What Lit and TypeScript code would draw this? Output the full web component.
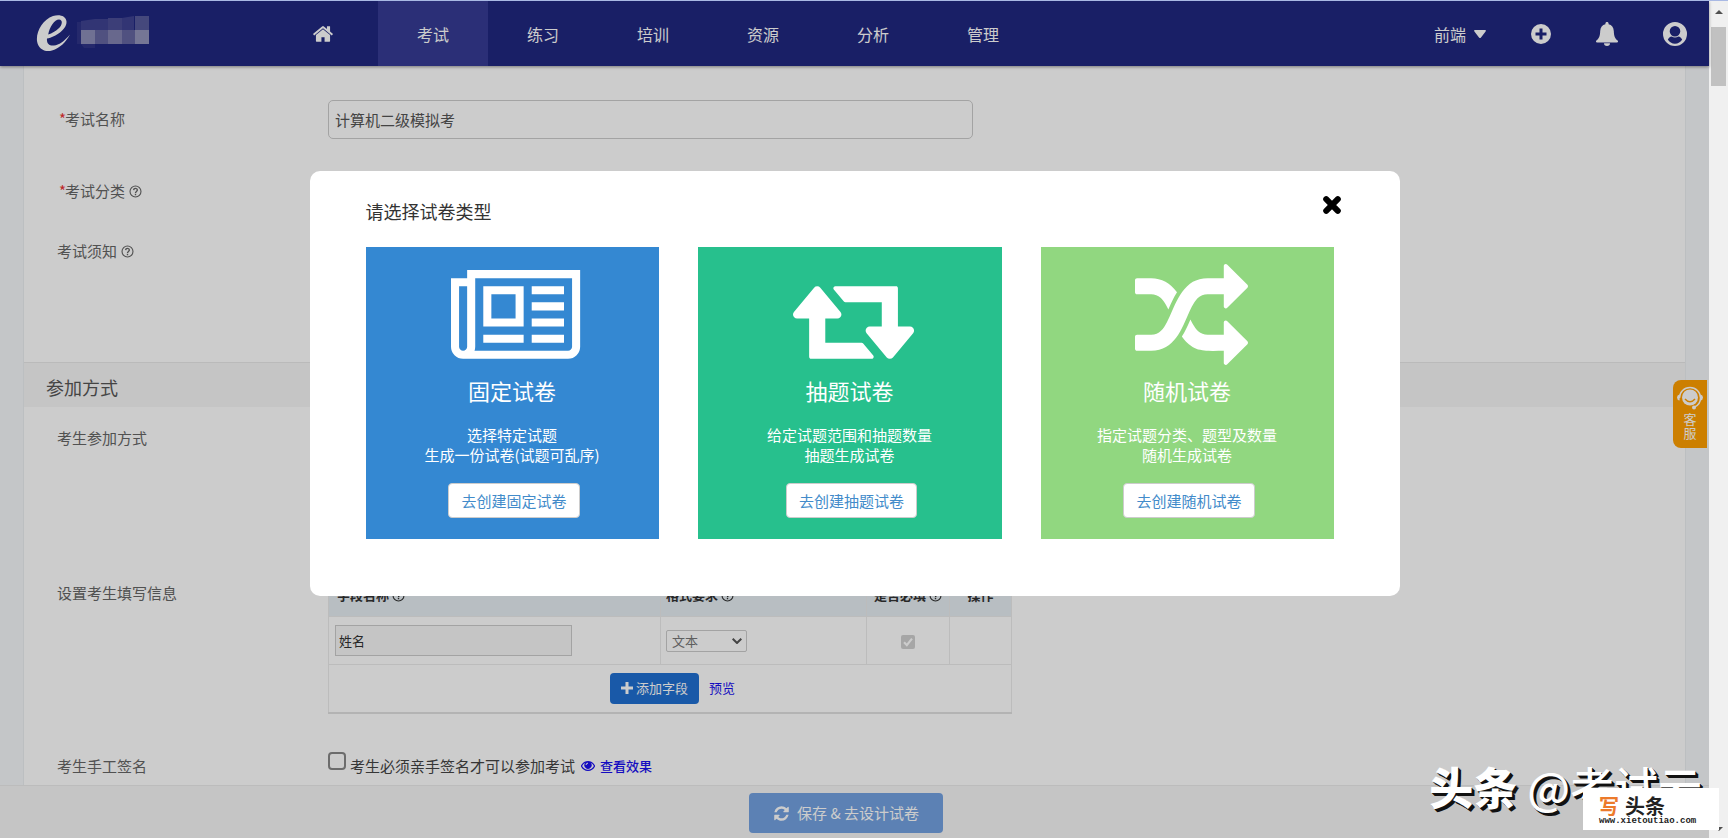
import { LitElement, html, css, svg, TemplateResult } from "lit";
import { customElement, property } from "lit/decorators.js";

const ICONS: Record<string, { box: string; body: TemplateResult }> = {
  home: {
    box: "0 0 1664 1792",
    body: svg`<path d="M1408 992v480q0 26-19 45t-45 19h-384v-384h-256v384h-384q-26 0-45-19t-19-45v-480q0-1 .5-3t.5-3l575-474 575 474q1 2 1 6zm223-69l-62 74q-8 9-21 11h-3q-13 0-21-7l-692-577-692 577q-12 8-24 7-13-2-21-11l-62-74q-8-10-7-23.500t11-21.500l719-599q32-26 76-26t76 26l244 204v-195q0-14 9-23t23-9h192q14 0 23 9t9 23v408l219 182q10 8 11 21.500t-7 23.500z"/>`,
  },
  plusCircle: {
    box: "0 0 20 20",
    body: svg`<path fill-rule="evenodd" d="M10 0a10 10 0 1 1 0 20a10 10 0 0 1 0-20zM8.500 4.500v4h-4v3h4v4h3v-4h4v-3h-4v-4z"/>`,
  },
  bell: {
    box: "0 0 22 24",
    body: svg`<path d="M11 0c1 0 1.600.7 1.600 1.700v.5c3.200.7 5 3.300 5.200 6.800.2 5 .9 7 3.800 9.600.8.7.4 1.900-.6 1.900H1c-1 0-1.400-1.200-.6-1.900C3.300 16 4 14 4.200 9c.2-3.500 2-6.100 5.200-6.800v-.5C9.400.7 10 0 11 0zM8 21.300h6a3 2.700 0 0 1-6 0z"/>`,
  },
  user: {
    box: "0 0 24 24",
    body: svg`<path fill-rule="evenodd" d="M12 0a12 12 0 1 1 0 24a12 12 0 0 1 0-24zM12 4a5.300 5.300 0 1 0 0 10.600A5.300 5.300 0 0 0 12 4zM4.800 17.600c1.500 2.600 4.200 4.200 7.200 4.200s5.700-1.600 7.200-4.200c-.9-2-2.200-3-3.700-3.200a7 7 0 0 1-7 0c-1.500.2-2.800 1.200-3.700 3.200z"/>`,
  },
  caret: { box: "0 0 12 8", body: svg`<path d="M1 0h10q1.600.2.600 1.400L7 7.400q-1 1-2 0L.4 1.400Q-.6.2 1 0z"/>` },
  help: {
    box: "0 0 14 14",
    body: svg`<g fill="none" stroke="currentColor"><circle cx="7" cy="7" r="5.900" stroke-width="1.200"/><path stroke-width="1.500" d="M5 5.500c.1-2.600 4-2.400 4 0 0 1.500-2 1.400-2 3M7 9.500v1.500"/></g>`,
  },
  close: {
    box: "0 0 18 18",
    body: svg`<path stroke="currentColor" stroke-width="6" stroke-linecap="round" d="M3.200 3.200l11.600 11.600M14.800 3.200L3.200 14.800"/>`,
  },
  plus: { box: "0 0 12 12", body: svg`<path d="M4.500 0h3v4.500H12v3H7.500V12h-3V7.500H0v-3h4.500z"/>` },
  eye: {
    box: "0 0 14 10",
    body: svg`<path fill-rule="evenodd" d="M7 0c3 0 5.500 1.700 7 4.500v1C12.500 8.300 10 10 7 10S1.500 8.300 0 5.500v-1C1.500 1.700 4 0 7 0zm-2.600 1.800C3 2.500 1.900 3.600 1.100 5 2.400 7.400 4.500 8.800 7 8.800s4.600-1.400 5.900-3.800c-.8-1.400-1.900-2.500-3.300-3.200a3.600 3.600 0 1 1-5.200 0zM7 1.700c-1.500 0-2.400 1-2.400 2.400h1C5.600 3.200 6.200 2.700 7 2.700z"/>`,
  },
  refresh: {
    box: "0 0 1792 1792",
    body: svg`<path d="M1639 1056q0 5-1 7-64 268-268 434.500t-478 166.500q-146 0-282.500-55t-243.500-157l-129 129q-19 19-45 19t-45-19-19-45v-448q0-26 19-45t45-19h448q26 0 45 19t19 45-19 45l-137 137q71 66 161 102t187 36q134 0 250-65t186-179q11-17 53-117 8-23 30-23h192q13 0 22.500 9.500t9.500 22.500zm25-800v448q0 26-19 45t-45 19h-448q-26 0-45-19t-19-45 19-45l138-138q-148-137-349-137-134 0-250 65t-186 179q-11 17-53 117-8 23-30 23h-199q-13 0-22.500-9.500t-9.500-22.500v-7q65-268 270-434.500t480-166.500q146 0 284 55.500t245 156.500l130-129q19-19 45-19t45 19 19 45z"/>`,
  },
  chevron: { box: "0 0 10 6", body: svg`<path fill="none" stroke="currentColor" stroke-width="2" d="M.7.7L5 5 9.300.7"/>` },
  check: { box: "0 0 13 13", body: svg`<path fill="none" stroke="currentColor" stroke-width="2" d="M2.800 6.800l2.600 2.600 4.800-6"/>` },
  newspaper: {
    box: "0 0 2048 1792",
    body: svg`<path d="M1024 512h-384v384h384v-384zm128 640v128h-640v-128h640zm0-768v640h-640v-640h640zm640 768v128h-512v-128h512zm0-256v128h-512v-128h512zm0-256v128h-512v-128h512zm0-256v128h-512v-128h512zm-1536 960v-960h-128v960q0 26 19 45t45 19 45-19 19-45zm1664 0v-1088h-1536v1088q0 33-11 64h1483q26 0 45-19t19-45zm128-1216v1216q0 80-56 136t-136 56h-1664q-80 0-136-56t-56-136v-1088h256v-128h1792z"/>`,
  },
  retweet: {
    box: "0 0 1920 1792",
    body: svg`<path d="M1280 1504q0 13-9.500 22.500t-22.500 9.500h-960q-8 0-13.500-2t-9-7-5.500-8-3-11.500-1-11.500v-600h-192q-26 0-45-19t-19-45q0-24 15-41l320-384q19-22 49-22t49 22l320 384q15 17 15 41 0 26-19 45t-45 19h-192v384h576q16 0 25 11l160 192q7 10 7 21zm640-416q0 24-15 41l-320 384q-20 23-49 23t-49-23l-320-384q-15-17-15-41 0-26 19-45t45-19h192v-384h-576q-16 0-25-12l-160-192q-7-9-7-20 0-13 9.500-22.500t22.500-9.500h960q8 0 13.500 2t9 7 5.500 8 3 11.500 1 11.500v600h192q26 0 45 19t19 45z"/>`,
  },
  random: {
    box: "0 0 1792 1792",
    body: svg`<path d="M666 481q-60 92-137 273-22-45-37-72.500t-40.500-63.500-51-56.500-63-35-81.500-14.500h-224q-14 0-23-9t-9-23v-192q0-14 9-23t23-9h224q250 0 410 225zm1126 799q0 14-9 23l-320 320q-9 9-23 9-13 0-22.500-9.500t-9.500-22.500v-192q-32 0-85 .5t-81 1-73-1-71-5-64-10.500-63-18.500-58-28.500-59-40-55-53.500-56-69.500q59-93 136-273 22 45 37 72.500t40.500 63.500 51 56.500 63 35 81.500 14.500h256v-192q0-14 9-23t23-9q12 0 24 10l319 319q9 9 9 23zm0-896q0 14-9 23l-320 320q-9 9-23 9-13 0-22.500-9.500t-9.500-22.500v-192h-256q-48 0-87 15t-69 45-51 61.500-45 77.500q-32 62-78 171-29 66-49.500 111t-54 105-64 100-74 83-90 68.500-106.500 42-128 16.500h-224q-14 0-23-9t-9-23v-192q0-14 9-23t23-9h224q48 0 87-15t69-45 51-61.500 45-77.500q32-62 78-171 29-66 49.500-111t54-105 64-100 74-83 90-68.500 106.500-42 128-16.500h256v-192q0-14 9-23t23-9q12 0 24 10l319 319q9 9 9 23z"/>`,
  },
  agent: {
    box: "0 0 26 24",
    body: svg`<path fill="none" stroke="currentColor" stroke-width="1.500" d="M2.500 12a10.500 10.500 0 0 1 21 0c0 4-2.500 7.500-6 9"/><path d="M2.600 8.500v6Q0 14 0 11.500t2.600-3zM23.400 8.500v6Q26 14 26 11.500t-2.600-3z"/><circle cx="17" cy="21.500" r="2"/><circle cx="13" cy="11.500" r="8"/><path fill="none" stroke="#ff9f00" stroke-width="1.500" d="M8 13q5 5.500 10 0"/>`,
  },
};

@customElement("ui-icon")
class UiIcon extends LitElement {
  @property() name = "";
  static styles = css`
    :host { display: inline-flex; flex: none; }
    svg { display: block; width: 100%; height: 100%; fill: currentColor; }
  `;
  render() {
    const icon = ICONS[this.name];
    return html`<svg viewBox=${icon.box} aria-hidden="true">${icon.body}</svg>`;
  }
}

@customElement("paper-card")
class PaperCard extends LitElement {
  @property() icon = "";
  @property() heading = "";
  @property({ attribute: false }) lines: string[] = [];
  static styles = css`
    :host {
      display: flex; flex-direction: column; align-items: center; box-sizing: border-box;
      padding: 15px 0 21px; color: #fff; text-align: center;
    }
    .icon { height: 113px; margin-left: 8px; }
    h3 { margin: 0; font-size: 22px; line-height: 30px; font-weight: 400; }
    p { margin: 20px 0 18px; font-size: 15px; line-height: 20px; }
    button {
      height: 35px; padding: 0 12px; margin-left: 4px; border: 1px solid #ccc; border-radius: 4px;
      background: #fff; color: #428bca; font: inherit; font-size: 15px; line-height: 20px;
    }
  `;
  render() {
    return html`
      <ui-icon class="icon" name=${this.icon}></ui-icon>
      <h3>${this.heading}</h3>
      <p>${this.lines[0]}<br />${this.lines[1]}</p>
      <button type="button">去创建${this.heading}</button>
    `;
  }
}

@customElement("app-root")
class AppRoot extends LitElement {
  static styles = css`
    :host {
      display: flex; box-sizing: border-box; height: 100vh; border-top: 1px solid #a9b9e4;
      overflow: hidden; position: relative; color: #444;
      font-family: "Noto Sans CJK SC", "Noto Sans", sans-serif; font-size: 15px; line-height: 20px;
    }
    * { box-sizing: border-box; }
    .window { flex: 1; min-width: 0; position: relative; display: flex; flex-direction: column; background: #f6f8fb; }
    .nav {
      height: 65px; flex: none; display: flex; align-items: stretch; padding-right: 22px;
      background: #202780; color: #fff; font-size: 16px; box-shadow: 0 1px 3px rgba(0,0,0,.4); z-index: 1;
    }
    .brand { width: 268px; flex: none; padding: 13px 0 0 36px; }
    .brand svg { display: block; }
    .tab { width: 110px; display: flex; align-items: center; justify-content: center; color: inherit; text-decoration: none; }
    .tab.on { background: #363b95; }
    .home { width: 22px; height: 22px; }
    .tools { margin-left: auto; display: flex; align-items: center; gap: 45px; }
    .tools button { display: flex; align-items: center; gap: 8px; padding: 0; border: 0; background: none; color: inherit; font: inherit; }
    .caret { width: 12px; height: 8px; }
    .i20 { width: 20px; height: 20px; }
    .i22 { width: 22px; height: 24px; }
    .i24 { width: 24px; height: 24px; }

    .panel { flex: 1; min-height: 0; overflow: hidden; margin: 0 23px; background: #fff; border: solid #eceff2; border-width: 0 1px; }
    .row { display: grid; grid-template-columns: 271px 1fr; padding-left: 33px; align-items: start; }
    .name { height: 106px; align-items: center; }
    .category { height: 38px; align-items: center; }
    .notice { height: 152px; padding-top: 31px; }
    .joining { height: 165px; padding-top: 21px; }
    .fields > .label { padding-top: 11px; }
    .sign { padding-top: 38px; }
    .sign > .label { padding-top: 4px; }
    .label { display: flex; align-items: center; gap: 4px; color: #666; }
    .star { color: #e33; margin-right: -5px; }
    .required { padding-left: 2px; }
    .help { width: 13px; height: 13px; }
    .text {
      width: 645px; height: 39px; padding: 0 6px; border: 1px solid #ccc; border-radius: 5px;
      background: #fff; color: #555; font: inherit;
    }
    h2 {
      margin: 0; height: 45px; padding: 0 22px; border-top: 1px solid #e9e9e9; background: #f7f7f7;
      font-size: 18px; line-height: 48px; font-weight: 400; color: #555;
    }
    table { width: 684px; border-collapse: collapse; table-layout: fixed; font-size: 13px; border: 1px solid #e0e0e0; border-bottom: 2px solid #e0e0e0; }
    th, td { border: 1px solid #ececec; padding: 0 6px; text-align: left; }
    th { height: 44px; padding: 0 8px; background: #e6eef3; color: #333; font-weight: 700; }
    th ui-icon { vertical-align: -2px; }
    td { height: 48px; }
    .c1 { width: 332px; } .c2 { width: 206px; } .c3 { width: 83px; }
    .c2, .second { padding: 0 5px; }
    .mid { text-align: center; padding: 0; }
    .field { display: block; width: 237px; height: 31px; padding: 0 3px; border: 1px solid #ccc; background: #f7f7f7; color: #333; font: inherit; }
    .pick { position: relative; display: block; width: 81px; }
    .pick select { appearance: none; width: 100%; height: 22px; padding: 0 5px; border: 1px solid #ccc; border-radius: 2px; background: #fff; color: #777; font: inherit; opacity: 1; display: block; }
    .pick ui-icon { position: absolute; right: 5px; top: 8px; width: 10px; height: 6px; color: #555; }
    .tick { position: relative; display: inline-flex; vertical-align: middle; }
    .tick input { appearance: none; width: 14px; height: 14px; margin: 0; border-radius: 2px; background: #d0d0d0; }
    .tick ui-icon { position: absolute; inset: 0; color: #fff; }
    .actions { display: flex; align-items: center; gap: 10px; padding-left: 275px; }
    .add { height: 31px; width: 89px; display: flex; align-items: center; justify-content: center; gap: 3px; padding: 0; border: 0; border-radius: 4px; background: #2070d3; color: #fff; font: inherit; }
    .add ui-icon { width: 12px; height: 12px; }
    a.link { color: #1a10f0; text-decoration: none; font-size: 13px; }
    .agree { display: flex; align-items: flex-start; gap: 4px; color: #444; }
    .agree input { appearance: none; width: 18px; height: 18px; margin: 0; border: 2px solid #888; border-radius: 4px; background: #fff; }
    .agree label, .agree a { padding-top: 4px; }
    .agree a { display: flex; align-items: center; gap: 5px; margin-left: 2px; font-weight: 500; }
    .agree a ui-icon { width: 14px; height: 10px; }

    .foot { height: 53px; flex: none; display: flex; justify-content: center; align-items: flex-start; padding: 7px 17px 0 0; border-top: 1px solid #ececec; background: #f7f7f7; }
    .save { width: 194px; height: 40px; display: flex; align-items: center; justify-content: center; gap: 7px; border: 0; border-radius: 4px; background: #73a2e2; color: #fff; font: inherit; }
    .save ui-icon { width: 17px; height: 17px; }

    .service {
      position: absolute; right: 2px; top: 379px; width: 34px; height: 68px; padding: 6px 0 0; display: flex; flex-direction: column; align-items: center;
      border: 0; border-radius: 8px 0 0 8px; background: #ff9f00; color: #fff; font: inherit; font-size: 13px; line-height: 14px; z-index: 1;
    }
    .service ui-icon { width: 26px; height: 24px; margin-bottom: 2px; }

    .overlay { position: absolute; inset: 0; z-index: 2; padding-top: 170px; background: rgba(0,0,0,.2); display: flex; justify-content: center; align-items: flex-start; }
    .modal { width: 1090px; max-width: 100%; padding: 26px 66px 57px 56px; border-radius: 10px; background: #fff; }
    .head { display: flex; justify-content: space-between; align-items: flex-start; height: 50px; }
    .head h1 { margin: 0; font-size: 18px; line-height: 28px; font-weight: 400; color: #333; }
    .x { display: flex; padding: 0; margin: -1px -7px 0 0; border: 0; background: none; color: #000; }
    .x ui-icon { width: 18px; height: 18px; }
    .cards { display: grid; grid-template-columns: 293fr 304fr 293fr; gap: 39px; }
    .blue { background: #3488d2; } .green { background: #27c08d; } .lime { background: #91d780; }

    .scroll { width: 19px; flex: none; display: flex; flex-direction: column; align-items: center; padding: 9px 0 7px; background: #f0f0f0; }
    .arrow { border: solid transparent; border-width: 0 4px 4px; border-bottom-color: #505050; }
    .thumb { width: 15px; height: 59px; margin-top: 13px; background: #c1c1c1; }
    .down { border-width: 4px 4px 0; border-top-color: #505050; margin-top: auto; }

    .mark { position: absolute; right: 26px; bottom: 19px; z-index: 3; font-size: 44px; line-height: 66px; font-weight: 500; color: #fff; text-shadow: 1px 1px 0 #111, 2px 2px 0 #111, 3px 3px 0 #111; white-space: nowrap; }
    .mark b { font-weight: 900; }
    .stamp { position: absolute; right: 9px; bottom: 8px; z-index: 4; width: 136px; height: 42px; padding: 7px 16px 0; background: #fff; color: #222; font-size: 20px; font-weight: 700; line-height: 22px; }
    .stamp em { font-style: normal; color: #ec7a2b; margin-right: 6px; }
    .stamp small { display: block; font: 700 9px/8px "Liberation Mono", monospace; white-space: nowrap; }
  `;

  tabs = ["考试", "练习", "培训", "资源", "分析", "管理"];
  papers = [
    { tone: "blue", icon: "newspaper", heading: "固定试卷", lines: ["选择特定试题", "生成一份试卷(试题可乱序)"] },
    { tone: "green", icon: "retweet", heading: "抽题试卷", lines: ["给定试题范围和抽题数量", "抽题生成试卷"] },
    { tone: "lime", icon: "random", heading: "随机试卷", lines: ["指定试题分类、题型及数量", "随机生成试卷"] },
  ];

  help() {
    return html`<ui-icon class="help" name="help"></ui-icon>`;
  }

  render() {
    return html`
      <div class="window">
        <header class="nav">
          <div class="brand">
            <svg width="114" height="38" viewBox="0 0 114 38">
              <path fill="#fff" fill-rule="evenodd" d="M11 24.500C20 23 31 15 30.500 7.500 30 1.500 23 0 17 2 7 5.500 0 17 1 27c1 8 8 11.500 15 9.500 8-2.500 14-8.500 18-16-6 7-11 10.500-16 11-5 .5-7.500-2-7-7zm1.200-4C13.500 13 18.500 5.500 23 5.500c4.500.5 3 6-.500 9-3 2.700-6.300 4.800-10.300 6z"/>
              <g>
                <path fill="#3f4392" d="M45 7l14-2v11H45zM59 5h13v11H59zM86 4l12-2v14H86z"/>
                <path fill="#4b4e96" d="M72 4h14v12H72z"/>
                <path fill="#575a9b" d="M99 2h14v14H99z"/>
                <path fill="#8d8eb8" d="M45 16h14v14H45z"/><path fill="#6466a0" d="M59 16h13v14H59zM86 16h13v14H86z"/>
                <path fill="#8283b1" d="M72 16h14v14H72z"/><path fill="#9394bb" d="M99 16h14v14H99z"/>
                <path fill="#2f3488" d="M41 8h4v22h-4zM45 30h14v4H48z"/>
              </g>
            </svg>
          </div>
          <a class="tab" href="#" aria-label="首页"><ui-icon class="home" name="home"></ui-icon></a>
          ${this.tabs.map((t, i) => html`<a class="tab ${i === 0 ? "on" : ""}" href="#">${t}</a>`)}
          <div class="tools">
            <button type="button">前端<ui-icon class="caret" name="caret"></ui-icon></button>
            <button type="button" aria-label="新建"><ui-icon class="i20" name="plusCircle"></ui-icon></button>
            <button type="button" aria-label="通知"><ui-icon class="i22" name="bell"></ui-icon></button>
            <button type="button" aria-label="账户"><ui-icon class="i24" name="user"></ui-icon></button>
          </div>
        </header>

        <main class="panel">
          <div class="row name">
            <label class="label required" for="exam-name"><span class="star">*</span>考试名称</label>
            <input class="text" id="exam-name" type="text" value="计算机二级模拟考" />
          </div>
          <div class="row category">
            <span class="label required"><span class="star">*</span>考试分类${this.help()}</span>
          </div>
          <div class="row notice"><span class="label">考试须知${this.help()}</span></div>
          <h2>参加方式</h2>
          <div class="row joining"><span class="label">考生参加方式</span></div>
          <div class="row fields">
            <span class="label">设置考生填写信息</span>
            <table>
              <thead>
                <tr>
                  <th class="c1">字段名称 ${this.help()}</th>
                  <th class="c2">格式要求 ${this.help()}</th>
                  <th class="c3 mid">是否必填 ${this.help()}</th>
                  <th class="mid">操作</th>
                </tr>
              </thead>
              <tbody>
                <tr>
                  <td><input class="field" type="text" value="姓名" aria-label="字段名称" disabled /></td>
                  <td class="second">
                    <span class="pick">
                      <select aria-label="格式要求" disabled><option>文本</option></select>
                      <ui-icon name="chevron"></ui-icon>
                    </span>
                  </td>
                  <td class="mid">
                    <span class="tick"><input type="checkbox" aria-label="是否必填" checked disabled /><ui-icon name="check"></ui-icon></span>
                  </td>
                  <td></td>
                </tr>
                <tr>
                  <td colspan="4">
                    <div class="actions">
                      <button class="add" type="button"><ui-icon name="plus"></ui-icon>添加字段</button>
                      <a class="link" href="#">预览</a>
                    </div>
                  </td>
                </tr>
              </tbody>
            </table>
          </div>
          <div class="row sign">
            <span class="label">考生手工签名</span>
            <div class="agree">
              <input id="sign" type="checkbox" />
              <label for="sign">考生必须亲手签名才可以参加考试</label>
              <a class="link" href="#"><ui-icon name="eye"></ui-icon>查看效果</a>
            </div>
          </div>
        </main>

        <footer class="foot">
          <button class="save" type="button"><ui-icon name="refresh"></ui-icon>保存 &amp; 去设计试卷</button>
        </footer>

        <button class="service" type="button"><ui-icon name="agent"></ui-icon><span>客<br />服</span></button>

        <div class="overlay">
          <section class="modal" role="dialog" aria-labelledby="pick-title">
            <div class="head">
              <h1 id="pick-title">请选择试卷类型</h1>
              <button class="x" type="button" aria-label="关闭"><ui-icon name="close"></ui-icon></button>
            </div>
            <div class="cards">
              ${this.papers.map(
                (p) => html`<paper-card class=${p.tone} icon=${p.icon} heading=${p.heading} .lines=${p.lines}></paper-card>`
              )}
            </div>
          </section>
        </div>
      </div>
      <div class="scroll"><i class="arrow"></i><i class="thumb"></i><i class="arrow down"></i></div>
      <div class="mark"><b>头条</b> @考试云</div>
      <div class="stamp"><em>写</em>头条<small>www.xietoutiao.com</small></div>
    `;
  }
}
